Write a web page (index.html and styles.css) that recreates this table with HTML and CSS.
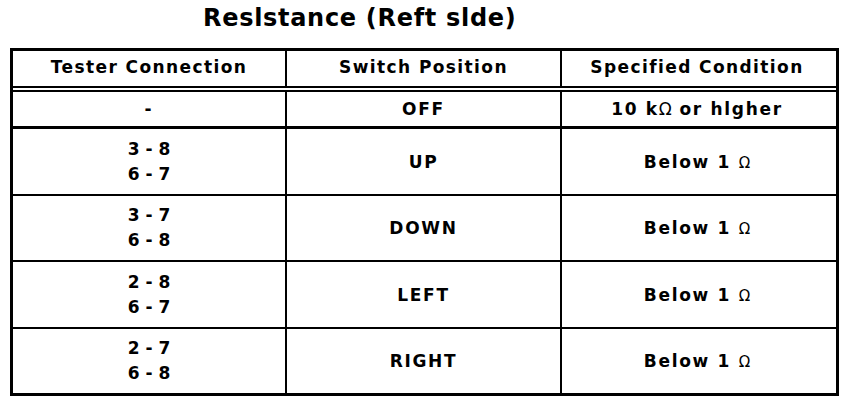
FILE: index.html
```html
<!DOCTYPE html>
<html>
<head>
<meta charset="utf-8">
<link rel="stylesheet" href="styles.css">
</head>
<body>
<h1 class="title">Reslstance (Reft slde)</h1>
<div class="table">
  <div class="row head">
    <div class="cell"><span class="txt">Tester Connection</span></div>
    <div class="cell"><span class="txt">Switch Position</span></div>
    <div class="cell"><span class="txt">Specified Condition</span></div>
  </div>
  <div class="row off">
    <div class="cell"><span class="txt">-</span></div>
    <div class="cell"><span class="txt">OFF</span></div>
    <div class="cell"><span class="txt">10 k<span class="ohm">Ω</span> or hlgher</span></div>
  </div>
  <div class="row data">
    <div class="cell"><div class="pins"><span>3 - 8</span><span>6 - 7</span></div></div>
    <div class="cell"><span class="txt">UP</span></div>
    <div class="cell"><span class="txt">Below 1 <span class="ohm thin">Ω</span></span></div>
  </div>
  <div class="row data">
    <div class="cell"><div class="pins"><span>3 - 7</span><span>6 - 8</span></div></div>
    <div class="cell"><span class="txt">DOWN</span></div>
    <div class="cell"><span class="txt">Below 1 <span class="ohm thin">Ω</span></span></div>
  </div>
  <div class="row data">
    <div class="cell"><div class="pins"><span>2 - 8</span><span>6 - 7</span></div></div>
    <div class="cell"><span class="txt">LEFT</span></div>
    <div class="cell"><span class="txt">Below 1 <span class="ohm thin">Ω</span></span></div>
  </div>
  <div class="row data last">
    <div class="cell"><div class="pins"><span>2 - 7</span><span>6 - 8</span></div></div>
    <div class="cell"><span class="txt">RIGHT</span></div>
    <div class="cell"><span class="txt">Below 1 <span class="ohm thin">Ω</span></span></div>
  </div>
</div>
</body>
</html>
```

FILE: styles.css
```css
html, body {
  margin: 0;
  padding: 0;
  background: #fff;
  color: #000;
}

body {
  width: 864px;
  height: 406px;
  overflow: hidden;
  font-family: "DejaVu Sans", "Liberation Sans", sans-serif;
  font-weight: bold;
}

.title {
  margin: 0;
  padding: 4px 0 0 203px;
  height: 48px;
  box-sizing: border-box;
  font-size: 24px;
  line-height: 28px;
  letter-spacing: 0.7px;
  font-weight: bold;
}

.table {
  margin-left: 10px;
  width: 829px;
  box-sizing: border-box;
  border: 3px solid #000;
}

.row {
  display: grid;
  grid-template-columns: 272px 275px 272px;
  border-bottom: 2px solid #000;
  box-sizing: border-box;
}

.cell {
  display: flex;
  align-items: center;
  justify-content: center;
  font-size: 17px;
  letter-spacing: 1.7px;
  text-align: center;
  white-space: nowrap;
}

.cell + .cell {
  border-left: 2px solid #000;
}

.head {
  height: 41px;
  border-bottom: 6px double #000;
}

.head .cell {
  letter-spacing: 1.4px;
  padding-bottom: 3px;
}

.off {
  height: 37px;
  border-bottom-width: 3px;
}

.data {
  height: 67px;
}

.data:nth-child(even) {
  height: 66px;
}

.data.last {
  border-bottom: none;
  height: 64px;
}

.pins {
  display: flex;
  flex-direction: column;
  align-items: center;
  line-height: 25px;
  letter-spacing: 0;
}

.ohm {
  font-weight: normal;
  letter-spacing: 0;
}

.thin {
  font-size: 15px;
}
```
